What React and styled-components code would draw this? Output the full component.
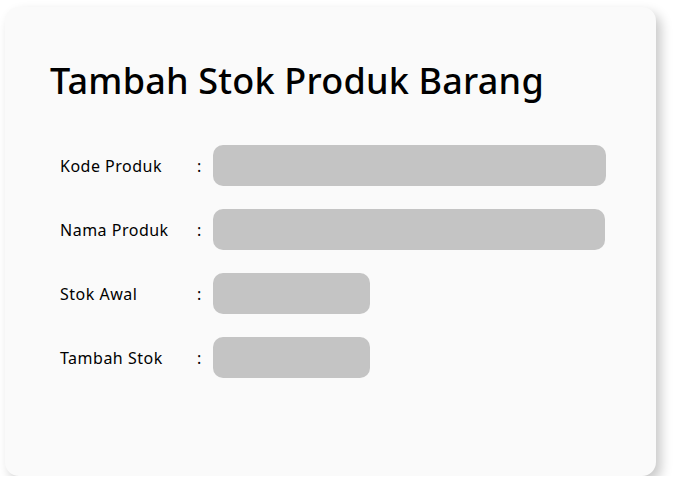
import React from 'react'
import styled, { createGlobalStyle } from 'styled-components'

const GlobalStyle = createGlobalStyle`
  body {
    margin: 0;
    background: #ffffff;
    font-family: 'Noto Sans', 'Lato', sans-serif;
  }
`

const Card = styled.div`
  box-sizing: border-box;
  margin: 7px 0 0 5px;
  width: 651px;
  height: 469px;
  background: #fafafa;
  border-radius: 14px;
  box-shadow: 5px 6px 12px rgba(0, 0, 0, 0.22);
  padding: 52px 0 0 45px;
`

const Title = styled.h1`
  margin: 0;
  font-size: 36px;
  line-height: 44px;
  font-weight: 500;
  letter-spacing: 0.2px;
  color: #000;
`

const Form = styled.div`
  display: grid;
  grid-template-columns: 137px 16px auto;
  row-gap: 23px;
  align-items: center;
  margin: 42px 0 0 10px;
`

const Label = styled.span`
  font-size: 16px;
  letter-spacing: 0.5px;
  color: #000;
`

const Colon = styled.span`
  font-size: 16px;
  color: #000;
`

const Field = styled.div`
  width: ${(props) => props.width}px;
  height: 41px;
  background: #c4c4c4;
  border-radius: 10px;
`

const rows = [
  { label: 'Kode Produk', width: 393 },
  { label: 'Nama Produk', width: 392 },
  { label: 'Stok Awal', width: 157 },
  { label: 'Tambah Stok', width: 157 },
]

const App = () => (
  <>
    <GlobalStyle />
    <Card>
      <Title>Tambah Stok Produk Barang</Title>
      <Form>
        {rows.map((row) => (
          <React.Fragment key={row.label}>
            <Label>{row.label}</Label>
            <Colon>:</Colon>
            <Field width={row.width} />
          </React.Fragment>
        ))}
      </Form>
    </Card>
  </>
)

export default App
